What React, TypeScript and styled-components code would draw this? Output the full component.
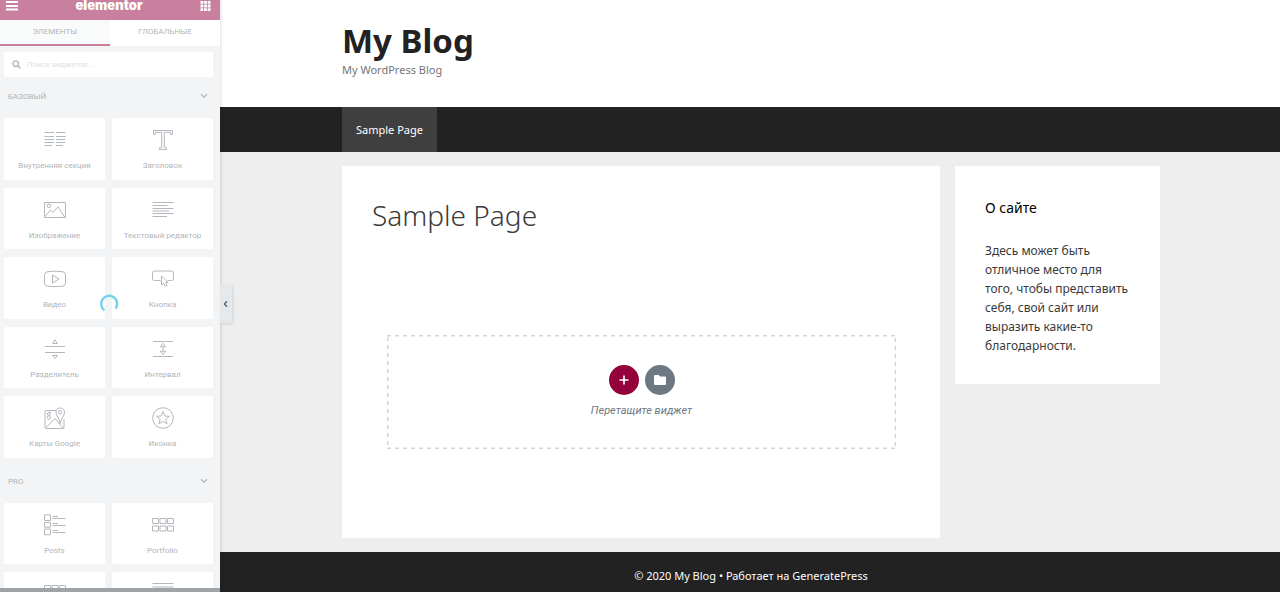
import React from "react";
import styled, { createGlobalStyle } from "styled-components";

const GlobalStyle = createGlobalStyle`
  * { box-sizing: border-box; }
  body { margin: 0; background: #eeeeee; font-family: "Noto Sans", "Open Sans", sans-serif; color: #3a3a3a; }
  h1, h2, p { margin: 0; }
  button { border: 0; padding: 0; background: none; font: inherit; color: inherit; cursor: pointer; }
  a { color: inherit; text-decoration: none; }
`;

const Editor = styled.div`
  display: flex;
  min-height: 100vh;
`;

/* ---------- Widget panel ---------- */

const PanelColumn = styled.div`
  position: relative;
  flex: 0 0 220px;
  height: 100vh;
`;

const Panel = styled.aside`
  display: flex;
  flex-direction: column;
  height: 100%;
  overflow: hidden;
  background: #f2f4f6;
  box-shadow: 0 0 4px rgba(0, 0, 0, 0.2);
  font-family: Roboto, sans-serif;
  color: #b0b5ba;
`;

const PanelHeader = styled.header`
  display: flex;
  flex: none;
  align-items: flex-start;
  justify-content: space-between;
  height: 20px;
  padding: 0 9px 0 6px;
  background: #c97f9e;
  color: #ffffff;
`;

const HeaderButton = styled.button`
  display: flex;
  height: 12px;
`;

const Logo = styled.span`
  font-family: Inter, sans-serif;
  font-size: 13px;
  font-weight: 900;
  line-height: 10px;
`;

const Tabs = styled.div`
  display: flex;
  flex: none;
  height: 26px;
  background: #ffffff;
`;

const Tab = styled.button<{ $active?: boolean }>`
  flex: 1;
  border-bottom: 2px solid ${(p) => (p.$active ? "#c97f9e" : "#ffffff")};
  background: ${(p) => (p.$active ? "#f9fbfb" : "#ffffff")};
  font-size: 8px;
  line-height: 12px;
`;

const Search = styled.label`
  display: flex;
  flex: none;
  align-items: center;
  gap: 6px;
  height: 25px;
  margin: 6px 7px 0 4px;
  padding: 0 8px;
  border-radius: 2px;
  background: #ffffff;
`;

const SearchInput = styled.input`
  flex: 1;
  min-width: 0;
  padding: 0;
  border: 0;
  outline: 0;
  background: none;
  font: italic 8px/12px Roboto, sans-serif;
  &::placeholder { color: #dcdfe3; opacity: 1; }
`;

const Category = styled.button`
  display: flex;
  flex: none;
  align-items: center;
  justify-content: space-between;
  height: 38px;
  padding: 0 12px 0 8px;
  font-size: 8px;
`;

const Widgets = styled.div<{ $rows: number }>`
  display: grid;
  flex: none;
  grid-template-columns: 1fr 1fr;
  grid-auto-rows: 1fr;
  gap: 8px 7px;
  height: ${(p) => p.$rows * 70 - 10}px;
  margin: 3px 7px 4px 4px;
`;

const Widget = styled.button`
  display: flex;
  flex-direction: column;
  align-items: center;
  gap: 9px;
  padding-top: 11px;
  border-radius: 2px;
  background: #ffffff;
  font-size: 8px;
  line-height: 12px;
  white-space: nowrap;
`;

const BottomBar = styled.div`
  position: absolute;
  right: 0;
  bottom: 0;
  left: 0;
  height: 4px;
  background: #a0a3a6;
`;

const Spinner = styled.svg`
  position: absolute;
  top: 294px;
  left: 99px;
`;

const Collapse = styled.button`
  position: absolute;
  top: 285px;
  left: 100%;
  display: flex;
  align-items: center;
  justify-content: center;
  width: 12px;
  height: 38px;
  padding-right: 2px;
  border-radius: 0 2px 2px 0;
  background: #e6e9ec;
  box-shadow: 1px 1px 3px rgba(0, 0, 0, 0.12);
  color: #555d66;
`;

/* ---------- Site preview ---------- */

const Site = styled.div`
  display: flex;
  flex: 1;
  flex-direction: column;
  min-width: 0;
`;

const SiteHeader = styled.header`
  padding: 20px 120px 29px 122px;
  background: #ffffff;
`;

const SiteTitle = styled.h1`
  color: #222222;
  font-size: 33px;
  font-weight: 700;
  line-height: 42px;
`;

const Tagline = styled.p`
  color: #757575;
  font-size: 11px;
  line-height: 16px;
`;

const SiteNav = styled.nav`
  display: flex;
  padding: 0 120px 0 122px;
  background: #222222;
`;

const NavLink = styled.a`
  padding: 0 14px;
  background: #3f3f3f;
  color: #ffffff;
  font-size: 11px;
  line-height: 45px;
`;

const Content = styled.div`
  display: flex;
  flex: 1;
  align-items: stretch;
  gap: 15px;
  padding: 14px 120px 14px 122px;
`;

const Article = styled.main`
  flex: 1;
  padding: 30px;
  background: #ffffff;
`;

const PageTitle = styled.h2`
  color: #3a3a3a;
  font-size: 28px;
  font-weight: 300;
  line-height: 38px;
`;

const DropZone = styled.div`
  position: relative;
  display: flex;
  flex-direction: column;
  align-items: center;
  gap: 9px;
  height: 114px;
  margin: 101px 14px 0 15px;
  padding-top: 30px;
`;

const DropOutline = styled.svg`
  position: absolute;
  inset: 0;
  width: 100%;
  height: 100%;
`;

const DropActions = styled.div`
  display: flex;
  gap: 6px;
`;

const RoundButton = styled.button<{ $color: string }>`
  display: flex;
  align-items: center;
  justify-content: center;
  width: 30px;
  height: 30px;
  border-radius: 50%;
  background: ${(p) => p.$color};
  color: #ffffff;
`;

const DropHint = styled.p`
  color: #6d7882;
  font: italic 11px/14px Roboto, sans-serif;
  font-size: 11px;
`;

const SidebarBox = styled.aside`
  align-self: flex-start;
  flex: 0 0 205px;
  padding: 31px 30px 29px;
  background: #ffffff;
`;

const SidebarTitle = styled.h2`
  margin-bottom: 22px;
  color: #000000;
  font-size: 14px;
  font-weight: 400;
  line-height: 22px;
`;

const SidebarText = styled.p`
  font-size: 12px;
  line-height: 19px;
`;

const SiteFooter = styled.footer`
  padding: 14px 0 6px 2px;
  background: #222222;
  color: #ffffff;
  font-size: 11px;
  line-height: 20px;
  text-align: center;
`;

/* ---------- Icons ---------- */

const Glyph = ({ children }: { children: React.ReactNode }) => (
  <svg width="22" height="22" viewBox="0 0 22 22" fill="none" stroke="#b3b8bd" strokeWidth="1" aria-hidden="true">
    {children}
  </svg>
);

const icons = {
  section: <path d="M0.5 3.5H10M12 3.5H21.5M0.5 7.5H10M12 7.5H21.5M0.5 10.5H10M12 10.5H21.5M0.5 13.5H10M12 13.5H21.5M0.5 16.5H8M12 16.5H19" />,
  heading: <path d="M1.5 1.5H20.500V5.500H18.800V3.300H12.300V18.800H14.500V20.500H7.500V18.800H9.700V3.300H3.200V5.500H1.500Z" />,
  image: (
    <>
      <path d="M0.500 3.500H21.500V18.500H0.500Z" />
      <circle cx="5" cy="6.800" r="1.700" />
      <path d="M1 17.500L6.500 11L9 13.500L14 7.800L20.500 18" />
    </>
  ),
  text: <path d="M0.500 3.500H21.500M0.500 6.500H15.500M0.500 9.500H21.500M0.500 12H17M0.500 14.500H21.500M0.500 17.500H15" />,
  video: (
    <>
      <path d="M3 3.800Q11 2.500 19 3.800Q21.500 4.500 21.500 7V15Q21.500 17.500 19 18.200Q11 19 3 18.200Q0.500 17.500 0.500 15V7Q0.500 4.500 3 3.800Z" />
      <path d="M8.500 7L15 11L8.500 15Z" />
    </>
  ),
  button: (
    <>
      <path d="M8.500 12.500H2.500Q0.500 12.500 0.500 10.500V5Q0.500 3 2.500 3H19.500Q21.500 3 21.500 5V10.500Q21.500 12.500 19.500 12.500H15.500" />
      <path d="M9.500 8V17L11.500 15.300L13.300 18.500L15 17.500L13.500 14.500H16Z" />
    </>
  ),
  divider: <path d="M1 8.500H21M1 14.500H21M8.500 5.500L11 1.800L13.500 5.500ZM8.500 17.500L11 20.700L13.500 17.500Z" />,
  spacer: <path d="M1 3.500H21M1 18.500H21M11 8.500V13.500M8.300 8.800L11 5.400L13.700 8.800ZM8.300 13.200L11 16.600L13.700 13.200Z" />,
  maps: (
    <>
      <path d="M12 3.500H2Q1 3.500 1 4.500V20.500Q1 21.500 2 21.500H19Q20 21.500 20 20.500V12" />
      <path d="M16.200 16.500C15.500 11.500 12 9 12 5.200A4.200 4.200 0 0 1 20.500 5.200C20.500 9 17 11.500 16.200 16.500Z" />
      <circle cx="16.200" cy="5.200" r="1.700" />
      <path d="M1.500 21L11 11.500L19.500 21.500" />
      <circle cx="4.800" cy="7" r="1.400" />
      <circle cx="4.800" cy="10.500" r="1.700" />
      <path d="M4.800 5.500L7 5" />
    </>
  ),
  star: (
    <>
      <circle cx="11" cy="11" r="10.300" />
      <path d="M11 4.600L12.800 9L17.400 9.300L13.800 12.300L15 16.900L11 14.300L7 16.900L8.200 12.300L4.600 9.300L9.200 9Z" />
    </>
  ),
  posts: <path d="M0.500 0.800H6.500V6.500H0.500ZM0.500 8.500H6.500V13.200H0.500ZM0.500 15H6.500V20.800H0.500ZM8.500 2.500H14M8.500 4.500H21.500M8.500 9.500H14M8.500 11.500H21.500M8.500 16.500H14M8.500 18.500H21.500" />,
  grid: <path d="M0.500 4.500H6.500V9.500H0.500ZM8 4.500H14V9.500H8ZM15.500 4.500H21.500V9.500H15.500ZM0.500 12H6.500V17H0.500ZM8 12H14V17H8ZM15.500 12H21.500V17H15.500Z" />,
  grid3: <path d="M0.500 2.500H6.500V7.500H0.500ZM8 2.500H14V7.500H8ZM15.500 2.500H21.500V7.500H15.500ZM0.500 10H6.500V15H0.500ZM8 10H14V15H8ZM15.500 10H21.500V15H15.500Z" />,
  lines: <path d="M0.500 0.500H21.500M0.500 4H21.500M0.500 8.500H21.500" />,
};

type IconName = keyof typeof icons;

const Chevron = () => (
  <svg width="8" height="6" viewBox="0 0 8 6" fill="none" stroke="currentColor" strokeWidth="1.300" aria-hidden="true">
    <path d="M1 1.200L4 4.200L7 1.200" />
  </svg>
);

const basic: [IconName, string][] = [
  ["section", "Внутренняя секция"],
  ["heading", "Заголовок"],
  ["image", "Изображение"],
  ["text", "Текстовый редактор"],
  ["video", "Видео"],
  ["button", "Кнопка"],
  ["divider", "Разделитель"],
  ["spacer", "Интервал"],
  ["maps", "Карты Google"],
  ["star", "Иконка"],
];

const pro: [IconName, string][] = [
  ["posts", "Posts"],
  ["grid", "Portfolio"],
  ["grid3", ""],
  ["lines", ""],
];

const WidgetGrid = ({ items }: { items: [IconName, string][] }) => (
  <Widgets $rows={items.length / 2}>
    {items.map(([icon, label], i) => (
      <Widget key={i} type="button" aria-label={label || icon}>
        <Glyph>{icons[icon]}</Glyph>
        {label}
      </Widget>
    ))}
  </Widgets>
);

export default function App() {
  return (
    <>
      <GlobalStyle />
      <Editor>
        <PanelColumn>
          <Panel>
            <PanelHeader>
              <HeaderButton type="button" aria-label="Menu">
                <svg width="12" height="12" viewBox="0 0 12 12" fill="#ffffff">
                  <path d="M0 1H12V3H0ZM0 5H12V7H0ZM0 8.500H12V10.500H0Z" />
                </svg>
              </HeaderButton>
              <Logo>elementor</Logo>
              <HeaderButton type="button" aria-label="Widgets">
                <svg width="11" height="12" viewBox="0 0 11 12" fill="#ffffff">
                  <path d="M0.500 1H3.300V3.800H0.500ZM4.100 1H6.900V3.800H4.100ZM7.700 1H10.500V3.800H7.700ZM0.500 4.600H3.300V7.400H0.500ZM4.100 4.600H6.900V7.400H4.100ZM7.700 4.600H10.500V7.400H7.700ZM0.500 8.200H3.300V11H0.500ZM4.100 8.200H6.900V11H4.100ZM7.700 8.200H10.500V11H7.700Z" />
                </svg>
              </HeaderButton>
            </PanelHeader>
            <Tabs>
              <Tab type="button" $active>ЭЛЕМЕНТЫ</Tab>
              <Tab type="button">ГЛОБАЛЬНЫЕ</Tab>
            </Tabs>
            <Search>
              <svg width="9" height="9" viewBox="0 0 9 9" fill="none" stroke="#b3b8bd" strokeWidth="1.400" aria-hidden="true">
                <circle cx="3.700" cy="3.700" r="2.800" />
                <path d="M5.800 5.800L8.500 8.500" />
              </svg>
              <SearchInput type="search" aria-label="Поиск виджетов" placeholder="Поиск виджетов..." />
            </Search>
            <Category type="button">
              БАЗОВЫЙ
              <Chevron />
            </Category>
            <WidgetGrid items={basic} />
            <Category type="button">
              PRO
              <Chevron />
            </Category>
            <WidgetGrid items={pro} />
          </Panel>
          <BottomBar />
          <Spinner width="20" height="20" viewBox="0 0 20 20" fill="none" stroke="#71d3ea" strokeWidth="2.400" aria-hidden="true">
            <path d="M5.500 16.300A8 8 0 1 1 16.600 14.500" />
          </Spinner>
          <Collapse type="button" aria-label="Collapse panel">
            <svg width="5" height="8" viewBox="0 0 5 8" fill="none" stroke="currentColor" strokeWidth="1.300">
              <path d="M4 1.200L1.400 4L4 6.800" />
            </svg>
          </Collapse>
        </PanelColumn>

        <Site>
          <SiteHeader>
            <SiteTitle>My Blog</SiteTitle>
            <Tagline>My WordPress Blog</Tagline>
          </SiteHeader>
          <SiteNav>
            <NavLink href="#sample">Sample Page</NavLink>
          </SiteNav>
          <Content>
            <Article>
              <PageTitle>Sample Page</PageTitle>
              <DropZone>
                <DropOutline aria-hidden="true">
                  <rect x="0" y="0" width="100%" height="100%" fill="none" stroke="#d3d5d8" strokeWidth="3" strokeDasharray="4 4" />
                </DropOutline>
                <DropActions>
                  <RoundButton type="button" $color="#93003c" aria-label="Add section">
                    <svg width="10" height="10" viewBox="0 0 10 10" stroke="currentColor" strokeWidth="1.700">
                      <path d="M5 0.500V9.500M0.500 5H9.500" />
                    </svg>
                  </RoundButton>
                  <RoundButton type="button" $color="#6d7882" aria-label="Add template">
                    <svg width="12" height="10" viewBox="0 0 12 10" fill="currentColor">
                      <path d="M1 0H4.600L6 1.500H11Q12 1.500 12 2.500V9Q12 10 11 10H1Q0 10 0 9V1Q0 0 1 0Z" />
                    </svg>
                  </RoundButton>
                </DropActions>
                <DropHint>Перетащите виджет</DropHint>
              </DropZone>
            </Article>
            <SidebarBox>
              <SidebarTitle>О сайте</SidebarTitle>
              <SidebarText>
                Здесь может быть отличное место для того, чтобы представить себя, свой сайт или выразить какие-то благодарности.
              </SidebarText>
            </SidebarBox>
          </Content>
          <SiteFooter>
            © 2020 My Blog • Работает на <a href="#generatepress">GeneratePress</a>
          </SiteFooter>
        </Site>
      </Editor>
    </>
  );
}
